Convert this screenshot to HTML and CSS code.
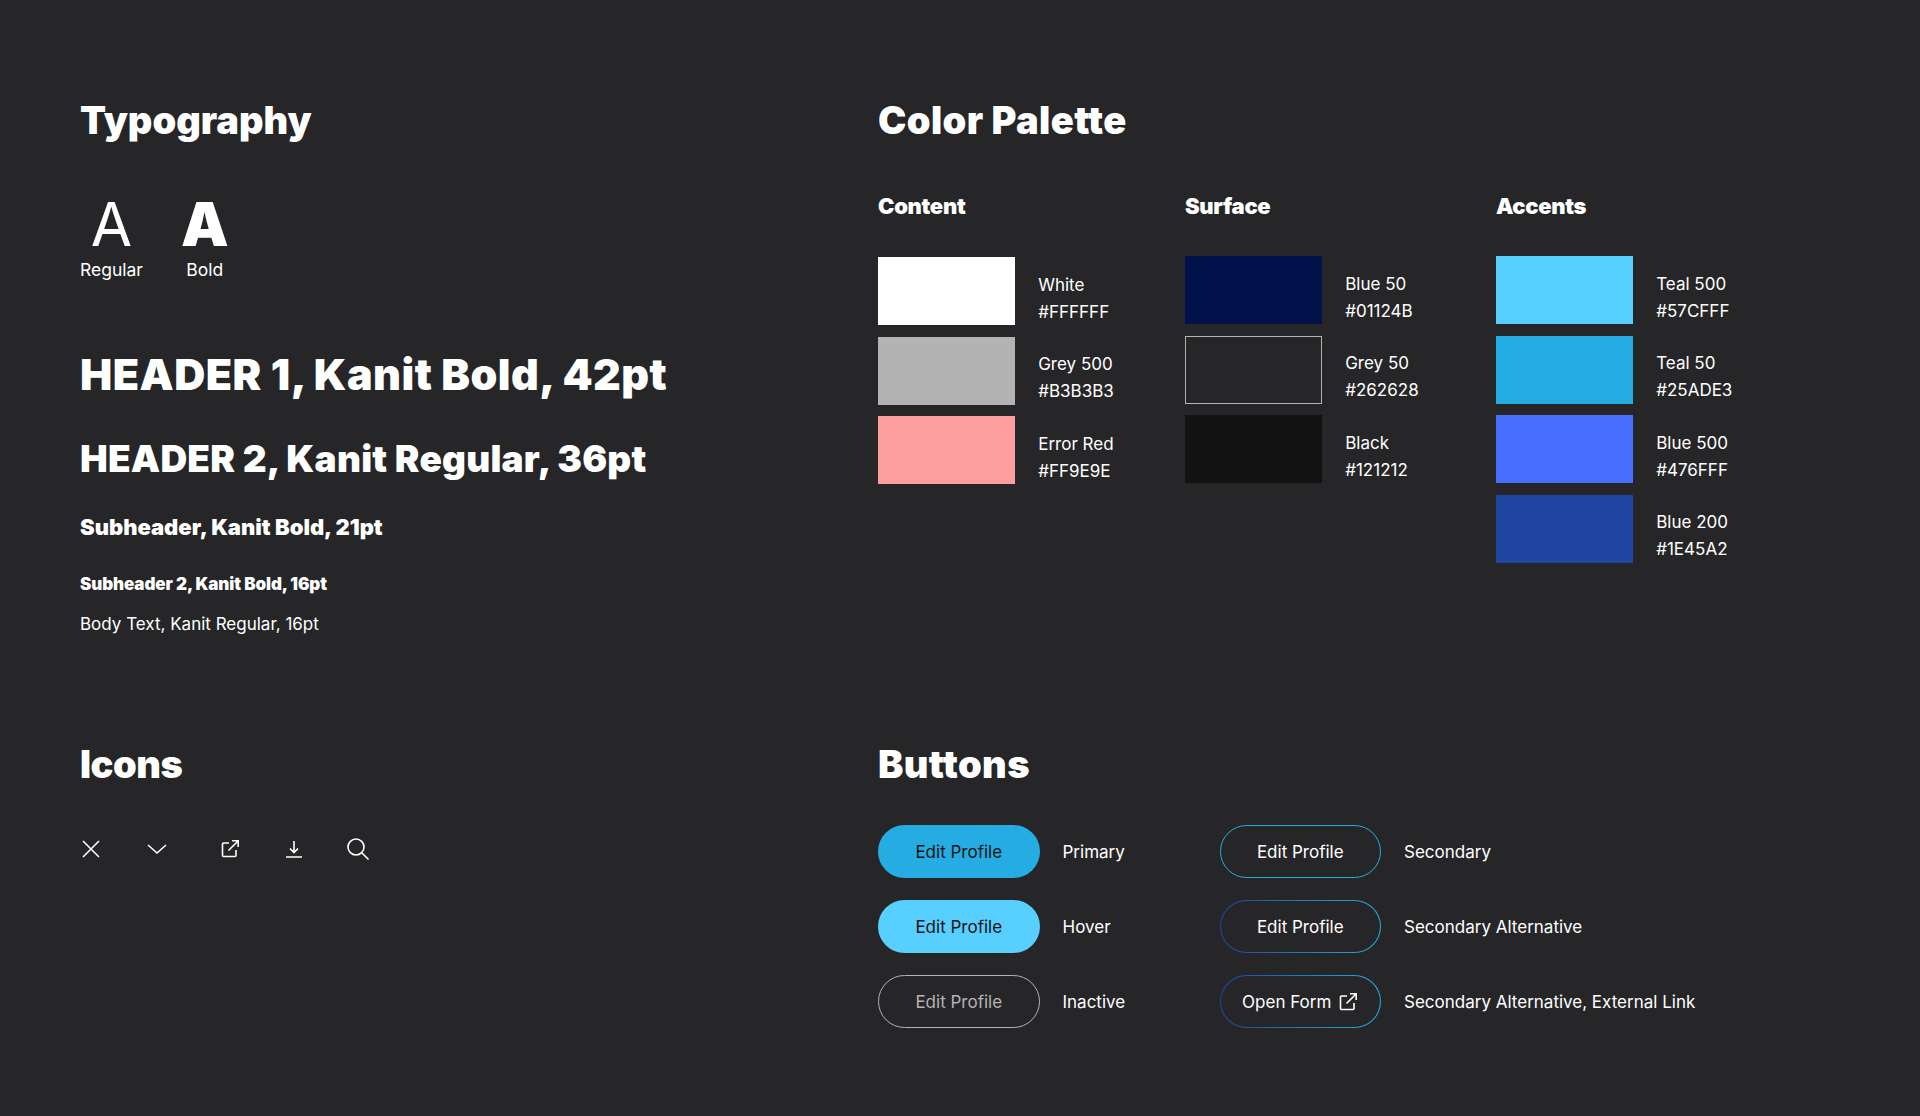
FILE: index.html
```html
<!DOCTYPE html>
<html lang="en">
<head>
<meta charset="utf-8">
<title>Style Guide</title>
<link rel="stylesheet" href="styles.css">
</head>
<body>
<main class="page">
  <section class="typography">
    <h2 class="title">Typography</h2>
    <div class="specimens">
      <div class="specimen"><span class="glyph">A</span><span class="caption">Regular</span></div>
      <div class="specimen"><span class="glyph glyph-bold">A</span><span class="caption">Bold</span></div>
    </div>
    <p class="t-h1">HEADER 1, Kanit Bold, 42pt</p>
    <p class="t-h2">HEADER 2, Kanit Regular, 36pt</p>
    <p class="t-sub">Subheader, Kanit Bold, 21pt</p>
    <p class="t-sub2">Subheader 2, Kanit Bold, 16pt</p>
    <p class="t-body">Body Text, Kanit Regular, 16pt</p>
  </section>

  <section class="palette">
    <h2 class="title title-wide">Color Palette</h2>
    <div class="palette-cols">
      <div class="col col-content">
        <h3 class="col-title">Content</h3>
        <div class="swatches swatches-low">
          <div class="row"><div class="swatch c-white"></div><div class="info"><span>White</span><span>#FFFFFF</span></div></div>
          <div class="row"><div class="swatch c-grey500"></div><div class="info"><span>Grey 500</span><span>#B3B3B3</span></div></div>
          <div class="row"><div class="swatch c-red"></div><div class="info"><span>Error Red</span><span>#FF9E9E</span></div></div>
        </div>
      </div>
      <div class="col col-surface">
        <h3 class="col-title">Surface</h3>
        <div class="swatches">
          <div class="row"><div class="swatch c-blue50"></div><div class="info"><span>Blue 50</span><span>#01124B</span></div></div>
          <div class="row"><div class="swatch c-grey50"></div><div class="info"><span>Grey 50</span><span>#262628</span></div></div>
          <div class="row"><div class="swatch c-black"></div><div class="info"><span>Black</span><span>#121212</span></div></div>
        </div>
      </div>
      <div class="col">
        <h3 class="col-title">Accents</h3>
        <div class="swatches">
          <div class="row"><div class="swatch c-teal500"></div><div class="info"><span>Teal 500</span><span>#57CFFF</span></div></div>
          <div class="row"><div class="swatch c-teal50"></div><div class="info"><span>Teal 50</span><span>#25ADE3</span></div></div>
          <div class="row"><div class="swatch c-blue500"></div><div class="info"><span>Blue 500</span><span>#476FFF</span></div></div>
          <div class="row"><div class="swatch c-blue200"></div><div class="info"><span>Blue 200</span><span>#1E45A2</span></div></div>
        </div>
      </div>
    </div>
  </section>

  <section class="icons">
    <h2 class="title title-tight">Icons</h2>
    <div class="icon-row">
      <svg class="ic ic-close" viewBox="0 0 20 20"><path d="M2 2L18 18M18 2L2 18"/></svg>
      <svg class="ic ic-chevron" viewBox="0 0 22 12"><path d="M2 2L11 10L20 2"/></svg>
      <svg class="ic ic-external" viewBox="0 0 20 20"><path d="M9 4H3.5A1 1 0 0 0 2.500 5V16.500A1 1 0 0 0 3.500 17.500H15A1 1 0 0 0 16 16.500V11M8.500 11.500L18 2M12 1.800H18.200V8"/></svg>
      <svg class="ic ic-download" viewBox="0 0 18 20"><path d="M9 2V13M5 9.500L9 13.500L13 9.500M1 18H17"/></svg>
      <svg class="ic ic-search" viewBox="0 0 24 24"><circle cx="10" cy="10" r="8"/><path d="M16 16L22.500 22.500"/></svg>
    </div>
  </section>

  <section class="buttons">
    <h2 class="title title-wide">Buttons</h2>
    <div class="button-grid">
      <div class="btn-row"><span class="btn btn-primary">Edit Profile</span><span class="btn-label">Primary</span></div>
      <div class="btn-row"><span class="btn btn-secondary">Edit Profile</span><span class="btn-label">Secondary</span></div>
      <div class="btn-row"><span class="btn btn-hover">Edit Profile</span><span class="btn-label">Hover</span></div>
      <div class="btn-row"><span class="btn btn-alt">Edit Profile</span><span class="btn-label">Secondary Alternative</span></div>
      <div class="btn-row"><span class="btn btn-inactive">Edit Profile</span><span class="btn-label">Inactive</span></div>
      <div class="btn-row"><span class="btn btn-alt">Open Form
        <svg class="ic ic-btn" viewBox="0 0 20 20"><path d="M9 4H3.500A1 1 0 0 0 2.500 5V16.500A1 1 0 0 0 3.500 17.500H15A1 1 0 0 0 16 16.500V11M8.500 11.500L18 2M12 1.800H18.200V8"/></svg></span><span class="btn-label">Secondary Alternative, External Link</span></div>
    </div>
  </section>
</main>
</body>
</html>
```
FILE: styles.css
```css
* { box-sizing: border-box; margin: 0; padding: 0; }
html, body { height: 100%; }
body {
  background: #262628;
  color: #fff;
  font-family: Inter, "Noto Sans", "Liberation Sans", sans-serif;
  overflow: hidden;
}
.page {
  display: grid;
  grid-template-columns: 798px 1fr;
  grid-template-rows: 644px auto;
  padding: 96px 0 0 80px;
}
.title {
  font-size: 38px;
  line-height: 48px;
  font-weight: 900;
}
.title-wide { letter-spacing: 0.4px; }
.title-tight { letter-spacing: -0.5px; }
.specimens { display: flex; gap: 38px; margin-top: 50px; }
.specimen { display: flex; flex-direction: column; align-items: center; }
.glyph { font-size: 60px; line-height: 60px; font-weight: 400; }
.glyph-bold { font-weight: 900; }
.caption { font-size: 17.5px; line-height: 24px; margin-top: 4px; }
.t-h1 { font-size: 43px; line-height: 60px; font-weight: 900; margin-top: 62px; letter-spacing: 0.47px; }
.t-h2 { font-size: 37px; line-height: 52px; font-weight: 900; margin-top: 29px; letter-spacing: 0.2px; }
.t-sub { font-size: 22px; line-height: 30px; font-weight: 900; margin-top: 27px; }
.t-sub2 { font-size: 17px; line-height: 24px; font-weight: 900; margin-top: 30px; letter-spacing: -0.1px; }
.t-body { font-size: 17px; line-height: 24px; margin-top: 16px; }

.palette-cols { display: flex; margin-top: 48px; }
.col-content { width: 307px; }
.col-surface { width: 311px; }
.col-title { font-size: 22px; line-height: 28px; font-weight: 900; letter-spacing: -0.3px; }
.swatches { display: flex; flex-direction: column; gap: 11.5px; margin-top: 36px; }
.swatches-low { margin-top: 37px; }
.row { display: flex; gap: 23px; height: 68px; }
.swatch { width: 137.2px; height: 68px; }
.info { display: flex; flex-direction: column; padding-top: 14.5px; font-size: 17px; line-height: 27px; }
.c-white { background: #fff; }
.c-grey500 { background: #b3b3b3; }
.c-red { background: #ff9e9e; }
.c-blue50 { background: #01124b; }
.c-grey50 { background: #262628; border: 1px solid #b3b3b3; }
.c-black { background: #121212; }
.c-teal500 { background: #57cfff; }
.c-teal50 { background: #25ade3; }
.c-blue500 { background: #476fff; }
.c-blue200 { background: #1e45a2; }

.icon-row { display: flex; align-items: center; height: 24px; margin-top: 49px; padding-left: 1px; }
.ic { fill: none; stroke: #fff; stroke-width: 1.6; flex: none; }
.ic-close { width: 20px; height: 20px; }
.ic-chevron { width: 22px; height: 12px; margin-left: 45px; }
.ic-external { width: 20px; height: 20px; margin-left: 52px; }
.ic-download { width: 18px; height: 20px; margin-left: 45px; }
.ic-search { width: 24px; height: 24px; margin-left: 43px; }
.ic-btn { width: 20px; height: 20px; margin-left: 7px; }

.button-grid {
  display: grid;
  grid-template-columns: 341.5px 1fr;
  row-gap: 22px;
  margin-top: 37px;
}
.btn-row { display: flex; align-items: center; gap: 23px; }
.btn {
  display: flex;
  align-items: center;
  justify-content: center;
  width: 161.5px;
  height: 53px;
  border-radius: 27px;
  font-size: 17px;
  border: 1.5px solid transparent;
}
.btn-label { font-size: 17px; }
.btn-primary { background: #25ade3; color: #121212; }
.btn-hover { background: #57cfff; color: #121212; }
.btn-inactive { border-color: #b3b3b3; color: #b3b3b3; }
.btn-secondary { border-color: #25ade3; }
.btn-alt {
  background:
    linear-gradient(#262628, #262628) padding-box,
    linear-gradient(90deg, #1e45a2, #25ade3) border-box;
}
```
